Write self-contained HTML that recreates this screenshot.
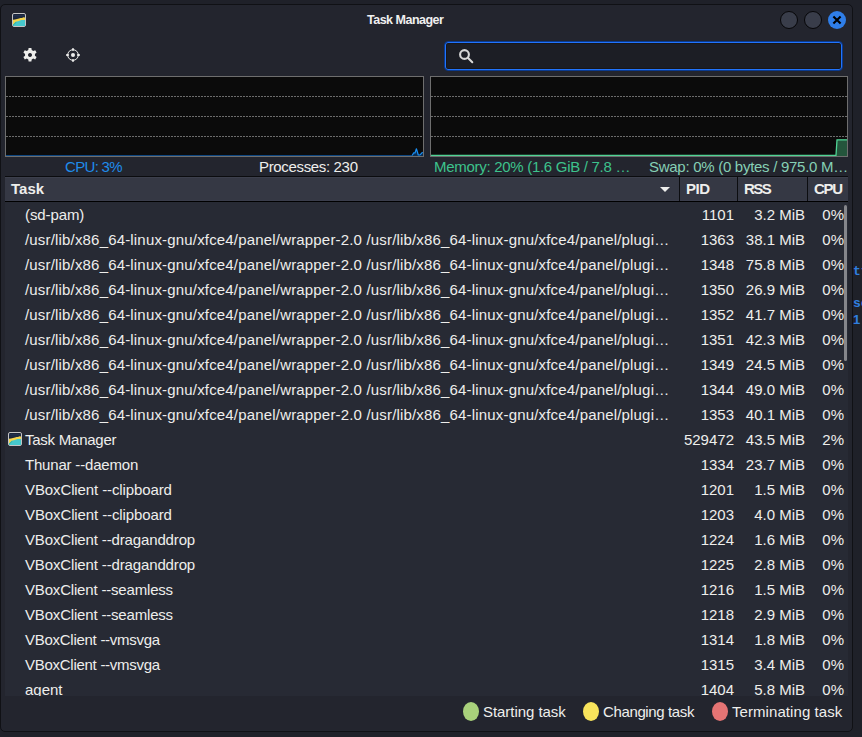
<!DOCTYPE html>
<html><head><meta charset="utf-8"><style>
*{margin:0;padding:0;box-sizing:border-box}
html,body{width:862px;height:737px;overflow:hidden;background:#1f2129;font-family:"Liberation Sans",sans-serif;color:#eeeeec}
.abs{position:absolute}
#win{position:absolute;left:0;top:4px;width:853px;height:728px;background:#23252e;border:1px solid #101115;border-radius:5px}
.lbl{position:absolute;font-size:15px;line-height:20px;white-space:nowrap}
.graph{position:absolute;top:76px;height:81px;background:#0b0b0b;border:1px solid #6e6e6e}
.grid{position:absolute;height:1px;background-image:linear-gradient(to right,#6c6c6c 66.6%,transparent 66.6%);background-size:3px 1px}
#list{position:absolute;left:5px;top:176px;width:843px;height:520px;background:#272a34}
#hdr{position:absolute;left:5px;top:176px;width:843px;height:26px;background:#353844;border-top:1px solid #0b0c0f;border-bottom:1px solid #000;box-shadow:inset 0 1px #3c3f4c, inset 0 -1px #3a3d4b}
.h{position:absolute;top:177px;height:24px;line-height:24px;font-weight:bold;font-size:15px;color:#eeeeec}
.sep{position:absolute;top:177px;width:1px;height:24px;background:#0c0d10}
.t,.n{position:absolute;height:25px;line-height:25px;font-size:15px;white-space:nowrap}
.t{left:25px;letter-spacing:-0.15px}
.t.path{letter-spacing:0.175px}
.t.vb{letter-spacing:-0.05px}
.n{text-align:right}
#rowclip{position:absolute;left:0;top:202px;width:862px;height:494px;overflow:hidden}
.dot{position:absolute;width:16px;height:19px;border-radius:50%}
</style></head><body>
<div class="abs" style="left:853px;top:264px;font:bold 13px 'Liberation Mono',monospace;color:#2f7fe0;line-height:15px">tt</div><div class="abs" style="left:853px;top:296px;font:bold 13px 'Liberation Mono',monospace;color:#2f7fe0;line-height:15px">sc</div><div class="abs" style="left:853px;top:312px;font:bold 13px 'Liberation Sans',sans-serif;color:#2f7fe0;line-height:15px">1</div>
<div id="win"></div>
<!-- title bar -->
<div class="abs" style="left:12px;top:13px;width:14px;height:14px"><svg width="14" height="14" viewBox="0 0 14 14"><rect x="0.5" y="0.5" width="13" height="13" rx="1.5" fill="#1b2438" stroke="#c4c4c4"/><path d="M1 2.5 H13 M1 4 H13" stroke="#2a3a5c" stroke-width="0.6"/><path d="M1 6.8 L3 6.4 L5 6 L7 5.6 L8.5 5 L10 4.9 L11.5 4.3 L13 4.4 L13 13 L1 13 Z" fill="#f5d54a"/><path d="M1 11.5 L2 10.6 L3.5 8.8 L6 8.2 L8 7.6 L9.5 7.1 L13 7 L13 13 L1 13 Z" fill="#46c8cc"/><path d="M1 12.2 L2.5 11 L4 9.2" stroke="#2aa07a" stroke-width="0.6" fill="none"/></svg></div>
<div class="abs" style="left:367px;top:11px;font-weight:bold;font-size:12.5px;line-height:18px;letter-spacing:-0.5px;color:#f0f0f0">Task Manager</div>
<div class="abs" style="left:780px;top:11px;width:18px;height:18px;border-radius:50%;background:#393d4a;border:1px solid #060608"></div>
<div class="abs" style="left:804px;top:11px;width:18px;height:18px;border-radius:50%;background:#393d4a;border:1px solid #060608"></div>
<div class="abs" style="left:828px;top:11px;width:18px;height:18px;border-radius:50%;background:#2f7ee8"></div>
<svg class="abs" style="left:828px;top:11px" width="18" height="18" viewBox="0 0 18 18"><path d="M5.4 5.4 L12.6 12.6 M12.6 5.4 L5.4 12.6" stroke="#000" stroke-width="2.1" stroke-linecap="butt"/></svg>
<!-- toolbar -->
<svg class="abs" style="left:22px;top:47px" width="16" height="16" viewBox="0 0 16 16"><path fill="#eeeeec" fill-rule="evenodd" d="M6.6 1 h2.8 l0.3 2.1 a5 5 0 0 1 1.5 0.9 l2 -0.8 l1.4 2.4 l-1.7 1.3 a5 5 0 0 1 0 1.8 l1.7 1.3 l-1.4 2.4 l-2 -0.8 a5 5 0 0 1 -1.5 0.9 l-0.3 2.1 h-2.8 l-0.3 -2.1 a5 5 0 0 1 -1.5 -0.9 l-2 0.8 l-1.4 -2.4 l1.7 -1.3 a5 5 0 0 1 0 -1.8 l-1.7 -1.3 l1.4 -2.4 l2 0.8 a5 5 0 0 1 1.5 -0.9 Z M8 6 a2 2 0 1 0 0.01 0 Z"/></svg>
<svg class="abs" style="left:65px;top:47px" width="16" height="16" viewBox="0 0 16 16"><circle cx="8" cy="8" r="5.3" fill="none" stroke="#eeeeec" stroke-width="1"/><circle cx="8" cy="8" r="2" fill="#eeeeec"/><rect x="7.1" y="1" width="1.8" height="3" rx="0.9" fill="#eeeeec"/><rect x="7.1" y="12" width="1.8" height="3" rx="0.9" fill="#eeeeec"/><rect x="1" y="7.1" width="3" height="1.8" rx="0.9" fill="#eeeeec"/><rect x="12" y="7.1" width="3" height="1.8" rx="0.9" fill="#eeeeec"/></svg>
<div class="abs" style="left:444px;top:41px;width:399px;height:30px;border:1px solid #0a3a90;box-shadow:inset 0 0 0 1px #2274fb, inset 0 0 0 2px #17171a;border-radius:4px;background:#1c1e25"></div>
<svg class="abs" style="left:456px;top:47px" width="20" height="20" viewBox="0 0 20 20"><circle cx="8.5" cy="7.5" r="4.4" fill="none" stroke="#d6d6d6" stroke-width="2.1"/><path d="M11.8 10.8 L16.3 15.3" stroke="#d9d9d9" stroke-width="2" stroke-linecap="round"/></svg>
<!-- graphs -->
<div class="graph" style="left:5px;width:419px"></div>
<div class="grid" style="left:6px;width:417px;top:96px"></div><div class="grid" style="left:6px;width:417px;top:116px"></div><div class="grid" style="left:6px;width:417px;top:136px"></div>
<div class="graph" style="left:430px;width:418px"></div>
<div class="grid" style="left:431px;width:416px;top:96px"></div><div class="grid" style="left:431px;width:416px;top:116px"></div><div class="grid" style="left:431px;width:416px;top:136px"></div>
<svg class="abs" style="left:6px;top:77px" width="417" height="79" viewBox="0 0 417 79">
<path d="M0 78.5 L406.2 78.5 L407.7 75.8 L409 76 L410.4 71.8 L412.3 78 L414 77.8 L416.6 75.2 L417 75.2 L417 79 L0 79 Z" fill="#0a2c50"/>
<path d="M0 78.5 L406 78.5" stroke="#0c4580" stroke-width="1"/>
<path d="M406.2 78.5 L407.7 75.8 L409 76 L410.4 71.8 L412.3 78 L414 77.8 L416.6 75.2" fill="none" stroke="#1a90f5" stroke-width="1.2" stroke-linejoin="round"/></svg>
<svg class="abs" style="left:431px;top:77px" width="416" height="79" viewBox="0 0 416 79"><path d="M0 78 L405 78 L406 62.5 L416 62.5 L416 79 L0 79 Z" fill="#24553c"/><path d="M0 78.3 L405 78.3 L406 62.8 L416 62.8" fill="none" stroke="#4fd394" stroke-width="1.3"/></svg>
<!-- status labels -->
<div class="lbl" style="left:65px;top:157px;color:#1f8cea;letter-spacing:-0.68px">CPU: 3%</div>
<div class="lbl" style="left:259px;top:157px;letter-spacing:-0.34px">Processes: 230</div>
<div class="lbl" style="left:434px;top:157px;color:#3dc28c;letter-spacing:-0.29px">Memory: 20% (1.6 GiB / 7.8 …</div>
<div class="lbl" style="left:649px;top:157px;color:#86cfb5;letter-spacing:-0.28px">Swap: 0% (0 bytes / 975.0 M…</div>
<!-- list -->
<div id="list"></div>
<div id="hdr"></div>
<div class="h" style="left:11px">Task</div>
<svg class="abs" style="left:660px;top:187px" width="10" height="5" viewBox="0 0 10 5"><path d="M0 0 L10 0 L5 5 Z" fill="#eeeeec"/></svg>
<div class="sep" style="left:679px"></div>
<div class="h" style="left:686px;letter-spacing:-0.5px">PID</div>
<div class="sep" style="left:737px"></div>
<div class="h" style="left:744px;letter-spacing:-1.5px">RSS</div>
<div class="sep" style="left:807px"></div>
<div class="h" style="left:814px;letter-spacing:-1.3px">CPU</div>
<div id="rowclip"><div class="abs" style="left:0;top:-202px;width:862px;height:737px">
<div class="t " style="top:202px;letter-spacing:-0.1px">(sd-pam)</div><div class="n" style="top:202px;right:128px">1101</div><div class="n" style="top:202px;right:57px">3.2 MiB</div><div class="n" style="top:202px;right:18px">0%</div>
<div class="t path" style="top:227px">/usr/lib/x86_64-linux-gnu/xfce4/panel/wrapper-2.0 /usr/lib/x86_64-linux-gnu/xfce4/panel/plugi…</div><div class="n" style="top:227px;right:128px">1363</div><div class="n" style="top:227px;right:57px">38.1 MiB</div><div class="n" style="top:227px;right:18px">0%</div>
<div class="t path" style="top:252px">/usr/lib/x86_64-linux-gnu/xfce4/panel/wrapper-2.0 /usr/lib/x86_64-linux-gnu/xfce4/panel/plugi…</div><div class="n" style="top:252px;right:128px">1348</div><div class="n" style="top:252px;right:57px">75.8 MiB</div><div class="n" style="top:252px;right:18px">0%</div>
<div class="t path" style="top:277px">/usr/lib/x86_64-linux-gnu/xfce4/panel/wrapper-2.0 /usr/lib/x86_64-linux-gnu/xfce4/panel/plugi…</div><div class="n" style="top:277px;right:128px">1350</div><div class="n" style="top:277px;right:57px">26.9 MiB</div><div class="n" style="top:277px;right:18px">0%</div>
<div class="t path" style="top:302px">/usr/lib/x86_64-linux-gnu/xfce4/panel/wrapper-2.0 /usr/lib/x86_64-linux-gnu/xfce4/panel/plugi…</div><div class="n" style="top:302px;right:128px">1352</div><div class="n" style="top:302px;right:57px">41.7 MiB</div><div class="n" style="top:302px;right:18px">0%</div>
<div class="t path" style="top:327px">/usr/lib/x86_64-linux-gnu/xfce4/panel/wrapper-2.0 /usr/lib/x86_64-linux-gnu/xfce4/panel/plugi…</div><div class="n" style="top:327px;right:128px">1351</div><div class="n" style="top:327px;right:57px">42.3 MiB</div><div class="n" style="top:327px;right:18px">0%</div>
<div class="t path" style="top:352px">/usr/lib/x86_64-linux-gnu/xfce4/panel/wrapper-2.0 /usr/lib/x86_64-linux-gnu/xfce4/panel/plugi…</div><div class="n" style="top:352px;right:128px">1349</div><div class="n" style="top:352px;right:57px">24.5 MiB</div><div class="n" style="top:352px;right:18px">0%</div>
<div class="t path" style="top:377px">/usr/lib/x86_64-linux-gnu/xfce4/panel/wrapper-2.0 /usr/lib/x86_64-linux-gnu/xfce4/panel/plugi…</div><div class="n" style="top:377px;right:128px">1344</div><div class="n" style="top:377px;right:57px">49.0 MiB</div><div class="n" style="top:377px;right:18px">0%</div>
<div class="t path" style="top:402px">/usr/lib/x86_64-linux-gnu/xfce4/panel/wrapper-2.0 /usr/lib/x86_64-linux-gnu/xfce4/panel/plugi…</div><div class="n" style="top:402px;right:128px">1353</div><div class="n" style="top:402px;right:57px">40.1 MiB</div><div class="n" style="top:402px;right:18px">0%</div>
<div class="abs" style="left:8px;top:432px;width:14px;height:14px"><svg width="14" height="14" viewBox="0 0 14 14"><rect x="0.5" y="0.5" width="13" height="13" rx="1.5" fill="#1b2438" stroke="#c4c4c4"/><path d="M1 2.5 H13 M1 4 H13" stroke="#2a3a5c" stroke-width="0.6"/><path d="M1 6.8 L3 6.4 L5 6 L7 5.6 L8.5 5 L10 4.9 L11.5 4.3 L13 4.4 L13 13 L1 13 Z" fill="#f5d54a"/><path d="M1 11.5 L2 10.6 L3.5 8.8 L6 8.2 L8 7.6 L9.5 7.1 L13 7 L13 13 L1 13 Z" fill="#46c8cc"/><path d="M1 12.2 L2.5 11 L4 9.2" stroke="#2aa07a" stroke-width="0.6" fill="none"/></svg></div><div class="t " style="top:427px;letter-spacing:-0.24px">Task Manager</div><div class="n" style="top:427px;right:128px">529472</div><div class="n" style="top:427px;right:57px">43.5 MiB</div><div class="n" style="top:427px;right:18px">2%</div>
<div class="t " style="top:452px;letter-spacing:-0.19px">Thunar --daemon</div><div class="n" style="top:452px;right:128px">1334</div><div class="n" style="top:452px;right:57px">23.7 MiB</div><div class="n" style="top:452px;right:18px">0%</div>
<div class="t " style="top:477px;letter-spacing:-0.11px">VBoxClient --clipboard</div><div class="n" style="top:477px;right:128px">1201</div><div class="n" style="top:477px;right:57px">1.5 MiB</div><div class="n" style="top:477px;right:18px">0%</div>
<div class="t " style="top:502px;letter-spacing:-0.11px">VBoxClient --clipboard</div><div class="n" style="top:502px;right:128px">1203</div><div class="n" style="top:502px;right:57px">4.0 MiB</div><div class="n" style="top:502px;right:18px">0%</div>
<div class="t " style="top:527px;letter-spacing:-0.14px">VBoxClient --draganddrop</div><div class="n" style="top:527px;right:128px">1224</div><div class="n" style="top:527px;right:57px">1.6 MiB</div><div class="n" style="top:527px;right:18px">0%</div>
<div class="t " style="top:552px;letter-spacing:-0.14px">VBoxClient --draganddrop</div><div class="n" style="top:552px;right:128px">1225</div><div class="n" style="top:552px;right:57px">2.8 MiB</div><div class="n" style="top:552px;right:18px">0%</div>
<div class="t " style="top:577px;letter-spacing:-0.18px">VBoxClient --seamless</div><div class="n" style="top:577px;right:128px">1216</div><div class="n" style="top:577px;right:57px">1.5 MiB</div><div class="n" style="top:577px;right:18px">0%</div>
<div class="t " style="top:602px;letter-spacing:-0.18px">VBoxClient --seamless</div><div class="n" style="top:602px;right:128px">1218</div><div class="n" style="top:602px;right:57px">2.9 MiB</div><div class="n" style="top:602px;right:18px">0%</div>
<div class="t " style="top:627px;letter-spacing:-0.27px">VBoxClient --vmsvga</div><div class="n" style="top:627px;right:128px">1314</div><div class="n" style="top:627px;right:57px">1.8 MiB</div><div class="n" style="top:627px;right:18px">0%</div>
<div class="t " style="top:652px;letter-spacing:-0.27px">VBoxClient --vmsvga</div><div class="n" style="top:652px;right:128px">1315</div><div class="n" style="top:652px;right:57px">3.4 MiB</div><div class="n" style="top:652px;right:18px">0%</div>
<div class="t " style="top:677px;letter-spacing:0px">agent</div><div class="n" style="top:677px;right:128px">1404</div><div class="n" style="top:677px;right:57px">5.8 MiB</div><div class="n" style="top:677px;right:18px">0%</div>
</div></div>
<div class="abs" style="left:844px;top:205px;width:3px;height:156px;border-radius:2px;background:#85868b"></div>
<!-- legend -->
<div class="dot" style="left:463px;top:702px;background:#a8d17b"></div>
<div class="lbl" style="left:483px;top:702px;letter-spacing:-0.05px">Starting task</div>
<div class="dot" style="left:583px;top:702px;background:#f8e45c"></div>
<div class="lbl" style="left:603px;top:702px;letter-spacing:-0.37px">Changing task</div>
<div class="dot" style="left:712px;top:702px;background:#e57474"></div>
<div class="lbl" style="left:732px;top:702px;letter-spacing:0.07px">Terminating task</div>
</body></html>
